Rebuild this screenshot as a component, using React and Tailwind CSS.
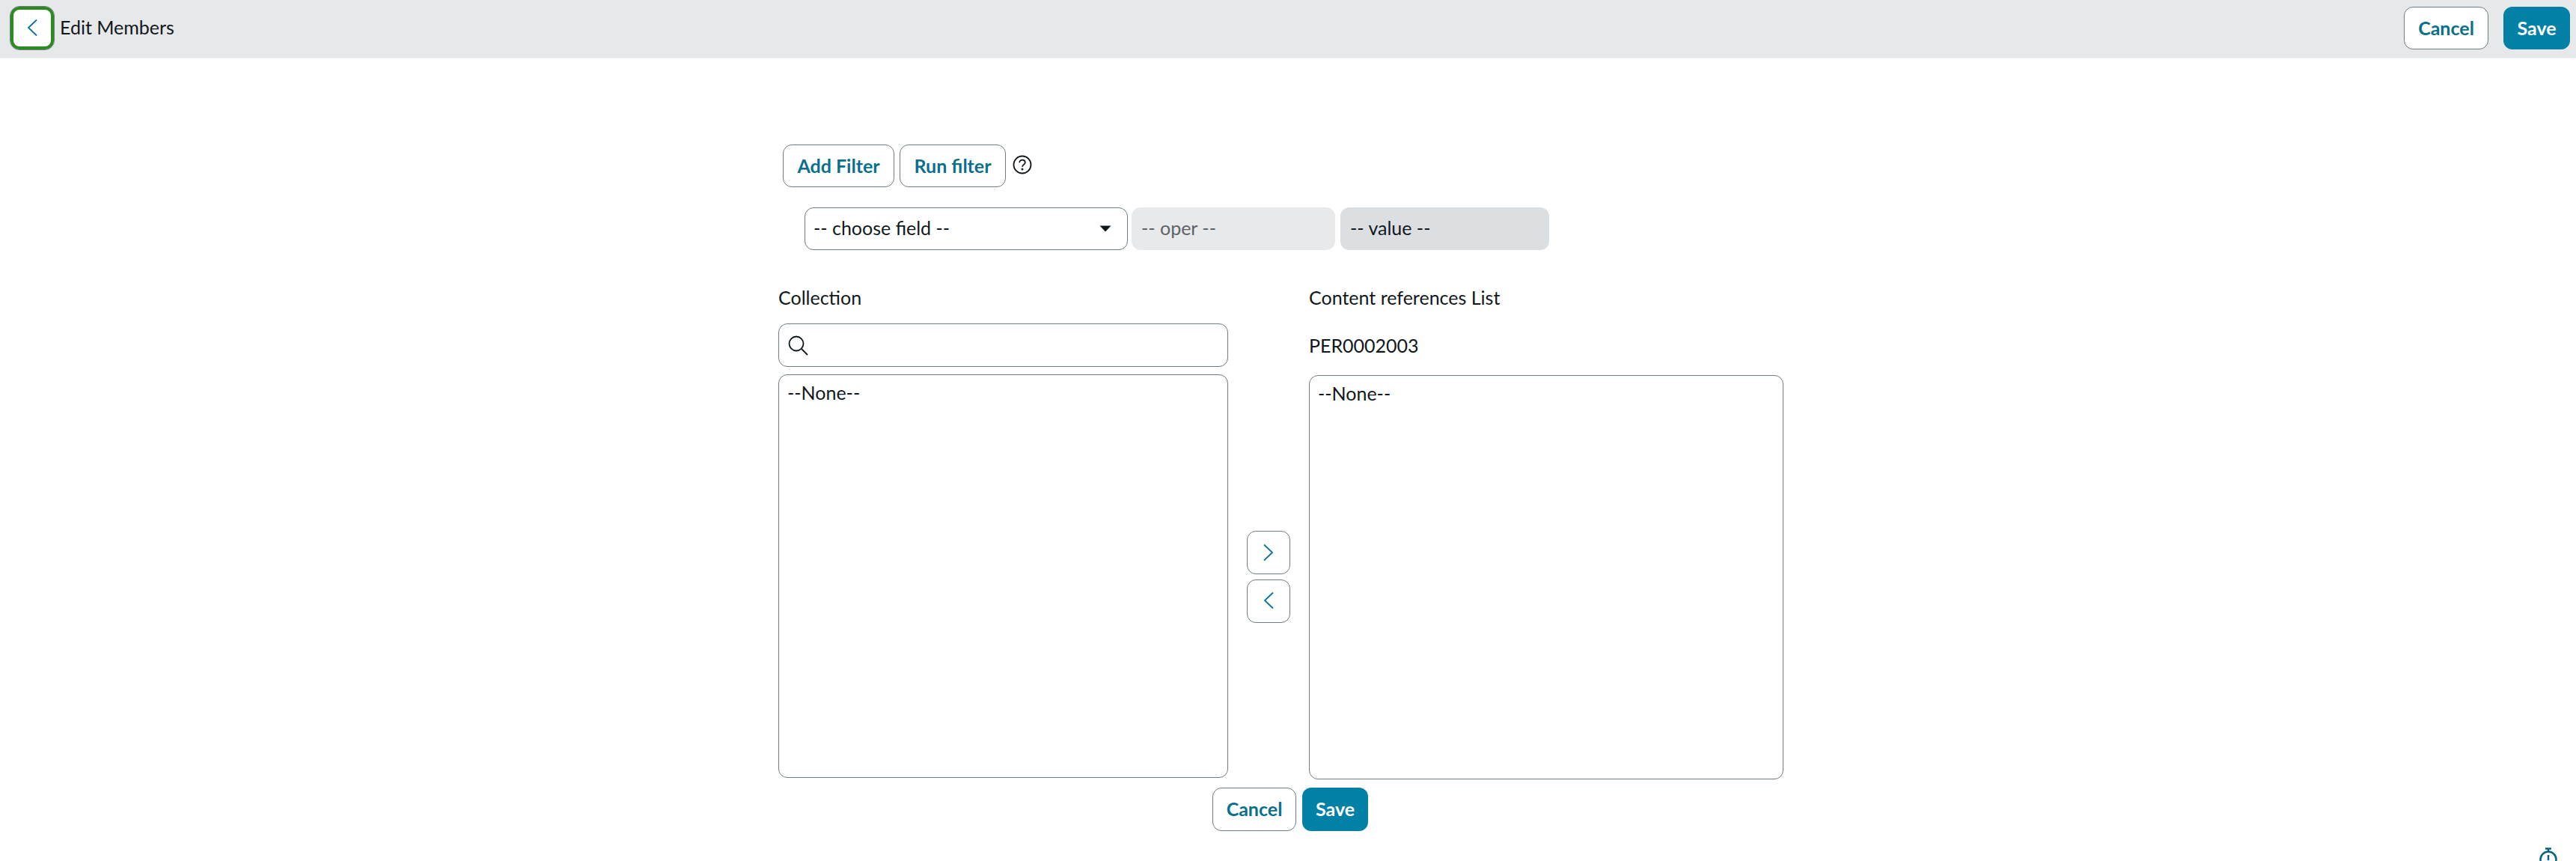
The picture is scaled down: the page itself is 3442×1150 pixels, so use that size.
const btn = 'h-[57px] flex items-center justify-center rounded-[12px] border border-[#6e7c84] bg-white text-[#0a6f8d] font-bold text-[25px]';
const primary = 'h-[57px] flex items-center justify-center rounded-[12px] bg-[#0280a5] text-white font-bold text-[25px]';
const field = 'rounded-[12px] border border-[#6e7c84] bg-white';

function Chevron({ dir = 'left', className = '' }) {
  return (
    <svg className={className} width="14" height="24" viewBox="0 0 14 24" fill="none" stroke="#0a7396" strokeWidth="1.8">
      <path d={dir === 'left' ? 'M13 1.5 2 12l11 10.5' : 'M1 1.5 12 12 1 22.5'} />
    </svg>
  );
}

export default function App() {
  return (
    <div className="relative h-[1150px] overflow-hidden bg-white text-[25px] text-[#11181c] font-['Lato','Liberation_Sans',sans-serif]">
      <header className="h-[78px] flex items-center justify-between pl-[14px] pr-[8px] pb-[2px] bg-[#e6e8ea] border-b border-[#eceef0]">
        <div className="flex items-center">
          <button className="w-[58px] h-[57px] flex items-center justify-center rounded-[12px] bg-white border-[4px] border-[#2a8c1c] outline outline-1 outline-[#6e7c84]">
            <Chevron className="-mt-[2px]" />
          </button>
          <span className="ml-[8px] -mt-[2px]">Edit Members</span>
        </div>
        <div className="flex items-center gap-[20px]">
          <button className={`${btn} w-[113px]`}>Cancel</button>
          <button className={`${primary} w-[89px]`}>Save</button>
        </div>
      </header>

      <main className="ml-[1040px] w-[1343px] pt-[115px]">
        <div className="flex items-center ml-[6px] gap-[7px]">
          <button className={`${btn} w-[149px]`}>Add Filter</button>
          <button className={`${btn} w-[142px]`}>Run filter</button>
          <svg className="ml-[2px] -mt-[3px]" width="26" height="26" viewBox="0 0 26 26" fill="none" stroke="#11181c" strokeWidth="1.8">
            <circle cx="13" cy="13" r="11.5" />
            <path d="M9.2 10.2c0-2.2 1.7-3.6 3.8-3.6s3.8 1.4 3.8 3.4c0 2.8-3.8 2.9-3.8 5.8" />
            <circle cx="13" cy="19" r="0.6" />
          </svg>
        </div>

        <div className="flex mt-[27px] ml-[35px] h-[57px]">
          <div className={`${field} w-[432px] flex items-center justify-between pl-[11px] pr-[21px]`}>
            <span className="-mt-[2px]">-- choose field --</span>
            <svg width="16" height="9" viewBox="0 0 16 9" fill="#11181c">
              <path d="M0.5 0.5h15L8 8.5z" />
            </svg>
          </div>
          <div className="ml-[5px] w-[272px] flex items-center pl-[13px] pb-[2px] rounded-[12px] bg-[#e8e9eb] text-[#5b6367]">-- oper --</div>
          <div className="ml-[7px] w-[279px] flex items-center pl-[13px] pb-[2px] rounded-[12px] bg-[#dcdfe2]">-- value --</div>
        </div>

        <div className="flex mt-[50px]">
          <div className="w-[601px]">
            <div className="h-[28px] leading-[26px]">Collection</div>
            <div className={`${field} mt-[20px] h-[58px] flex items-center pl-[12px]`}>
              <svg width="27" height="27" viewBox="0 0 27 27" fill="none" stroke="#11181c" strokeWidth="1.8">
                <circle cx="11" cy="11" r="9.5" />
                <path d="m18 18 8 8" />
              </svg>
            </div>
            <div className={`${field} mt-[10px] h-[539px] pl-[11px] pt-[5px]`}>--None--</div>
          </div>

          <div className="w-[108px] pl-[25px] pt-[325px] flex flex-col gap-[7px]">
            <button className={`${btn} w-[58px] h-[58px]`}><Chevron dir="right" /></button>
            <button className={`${btn} w-[58px] h-[58px]`}><Chevron className="-mt-[3px]" /></button>
          </div>

          <div className="w-[634px]">
            <div className="h-[28px] leading-[26px]">Content references List</div>
            <div className="mt-[36px] h-[28px] leading-[26px]">PER0002003</div>
            <div className={`${field} mt-[25px] h-[540px] pl-[11px] pt-[5px]`}>--None--</div>
          </div>
        </div>

        <div className="flex ml-[580px] mt-[11px] gap-[8px]">
          <button className={`${btn} w-[112px] h-[58px]`}>Cancel</button>
          <button className={`${primary} w-[88px] h-[58px]`}>Save</button>
        </div>
      </main>

      <svg className="absolute left-[3393px] top-[1132px]" width="24" height="30" viewBox="0 0 24 30" fill="none" stroke="#0a6480" strokeWidth="2.5">
        <circle cx="12" cy="16" r="10.5" />
        <path d="M8 1.5h8M12 1.5v4M12 10v7" />
      </svg>
    </div>
  );
}
